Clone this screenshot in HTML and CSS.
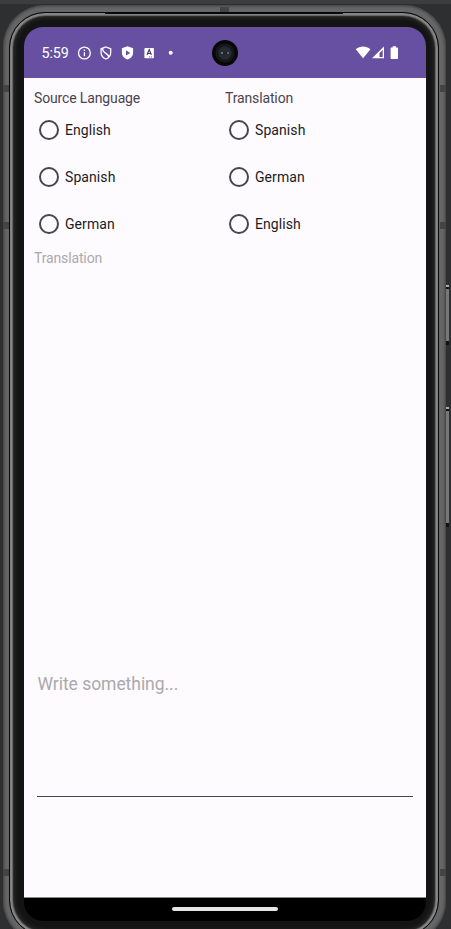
FILE: index.html
```html
<!DOCTYPE html>
<html lang="en">
<head>
<meta charset="utf-8">
<title>Translator</title>
<link rel="stylesheet" href="styles.css">
</head>
<body>
<div class="desk">
  <i class="key power"></i>
  <i class="key volume"></i>
  <div class="shell">
    <i class="band top"></i>
    <i class="band l1"></i><i class="band l2"></i><i class="band l3"></i>
    <i class="band r1"></i><i class="band r2"></i><i class="band r3"></i>
    <div class="rim">
      <i class="slit"></i>
      <div class="screen">
        <header class="status">
          <span class="clock">5:59</span>
          <svg class="notices" width="100" height="16" viewBox="0 0 100 16">
            <g fill="none" stroke="#fff" stroke-width="1.3">
              <circle cx="7.4" cy="8" r="5.9"/>
              <path d="M7.4 7.2v4M7.4 4.6v1.4"/>
              <path d="M28.900 2l4.800 1.800v3.700c0 3-2 5.400-4.800 6.500c-2.800-1.100-4.800-3.500-4.800-6.500V3.800z"/>
              <path d="M25.500 3.500c0 5 5.500 4 6.300 8.500"/>
            </g>
            <path fill="#fff" d="M50.500 1.200l5.600 2.100v4.200c0 3.400-2.400 6-5.600 7.100c-3.200-1.100-5.600-3.700-5.600-7.100V3.300z"/>
            <path fill="#6750a2" d="M49 5.200l4.200 2.700L49 10.600z"/>
            <rect x="67.400" y="3" width="9.500" height="10.300" rx=".8" fill="#fff"/>
            <path d="M70 10l2.200-5.500l2.200 5.500M70.800 8.500h2.800" fill="none" stroke="#4b3b78" stroke-width="1.200"/>
            <path d="M72 12h1M74 12h1" stroke="#6750a2"/>
            <circle cx="93.700" cy="7.800" r="2" fill="#fff"/>
          </svg>
          <span class="camera"><i></i></span>
          <svg class="system" width="46" height="16" viewBox="0 0 46 16">
            <path fill="#fff" d="M.8 4.200C5.200 .6 11 .6 15.400 4.200L8.100 13.300z"/>
            <path fill="#fff" fill-rule="evenodd" d="M29 1.500V13.300H17zM27.700 5L24.500 8V12H27.700z"/>
            <path fill="#fff" d="M37.700 1.300h3.300v1.200h1.200q.8 0 .8.800v10q0 .8-.8.800h-5.800q-.8 0-.8-.8V3.300q0-.8.8-.8h1.300z"/>
          </svg>
        </header>
        <main class="app">
          <div class="columns">
            <section class="group">
              <h2>Source Language</h2>
              <label><i class="radio"></i>English</label>
              <label><i class="radio"></i>Spanish</label>
              <label><i class="radio"></i>German</label>
            </section>
            <section class="group target">
              <h2>Translation</h2>
              <label><i class="radio"></i>Spanish</label>
              <label><i class="radio"></i>German</label>
              <label><i class="radio"></i>English</label>
            </section>
          </div>
          <p class="result">Translation</p>
          <div class="field">Write something...</div>
        </main>
        <footer class="nav"><i></i></footer>
      </div>
    </div>
  </div>
</div>
</body>
</html>
```
FILE: styles.css
```css
* { box-sizing: border-box; }
html, body { margin: 0; height: 929px; overflow: hidden; }
body { font-family: Roboto, sans-serif; background: #2d2f30; }
i { display: block; }

.desk {
  position: relative;
  width: 451px;
  height: 929px;
  padding: 5px 5px 0 3px;
  overflow: hidden;
  background: linear-gradient(#3c3d3f 4px, #2d2f30 4px);
}

.shell {
  position: relative;
  height: 938px;
  padding: 7px 7px 7px 6px;
  border-radius: 42px;
  background: #666;
  box-shadow: inset 0 0 3px 1px #3c3c3c;
}
.rim {
  position: relative;
  height: 924px;
  padding: 14px 11px 0 14px;
  border: 1px solid #070707;
  border-radius: 36px;
  background: #141414;
  box-shadow: inset 0 0 0 2px #858585, inset 0 0 1px 3px #6c6c6c, inset 0 0 5px 4px #333;
}
.band { position: absolute; background: #444; }
.top { left: 217px; top: 2px; width: 9px; height: 5px; }
.l1, .l2, .l3 { left: 0; width: 6px; height: 7px; }
.r1, .r2, .r3 { right: 0; width: 6px; height: 7px; }
.l1, .r1 { top: 80px; }
.l2, .r2 { top: 217px; }
.l3, .r3 { top: 864px; }
.slit { position: absolute; left: 95px; top: -1px; width: 238px; height: 2px; background: #070707; }

.key { position: absolute; left: 446px; width: 3px; background: #777; border: solid #111; border-width: 4px 0; }
.key::before { content: ""; position: absolute; top: -4px; width: 3px; height: 2px; background: #aaa; }
.power { top: 285px; height: 60px; }
.volume { top: 407px; height: 120px; }

.screen {
  display: flex;
  flex-direction: column;
  width: 402px;
  height: 894px;
  border-radius: 19px;
  overflow: hidden;
  background: #000;
}
.status {
  display: flex;
  align-items: center;
  flex: 0 0 51px;
  padding-left: 17.500px;
  background: #6750a2;
  color: #fff;
}
.clock { width: 35.500px; font-size: 14.300px; line-height: 20px; letter-spacing: -.1px; padding-top: 1px; }
.notices { flex: none; }
.camera {
  display: grid;
  place-items: center;
  width: 26px;
  height: 26px;
  margin: 1px 0 0 35px;
  border-radius: 50%;
  background: radial-gradient(circle, #272b30 0 6px, #15171a 7px 9px, #070707 10px);
}
.camera i { width: 8px; height: 2px; background: linear-gradient(90deg, #438078 2px, #222 2px 6px, #4168a5 6px); }
.system { flex: none; margin-left: 117px; margin-top: 0; }

.app {
  display: flex;
  flex-direction: column;
  flex: 1;
  padding: 10px 13px 0 10px;
  background: #fdfbfd;
  border-bottom: 1px solid #888;
}
.columns { display: grid; grid-template-columns: 191px 1fr; height: 160px; }
h2 { margin: 1px 0 0; font-size: 14px; font-weight: 400; line-height: 19px; color: #49454f; letter-spacing: -.14px; }
label { display: flex; align-items: center; gap: 6px; height: 47px; padding-left: 5px; font-size: 14px; letter-spacing: .08px; color: #1c1b1f; }
.group h2 + label { margin-top: -2px; }
.target label { padding-left: 4px; }
.radio { flex: none; width: 20px; height: 20px; border: 2px solid #49454f; border-radius: 50%; }
.result { margin: 1px 0 0; font-size: 14px; line-height: 19px; letter-spacing: -.14px; color: #aba9ac; }
.field {
  height: 127px;
  margin: 402px 0 0 3px;
  padding: 3px .5px;
  border-bottom: 1px solid #49454f;
  font-size: 17.500px;
  line-height: 22px;
  letter-spacing: -.04px;
  color: #aba9ac;
}
.nav { flex: 0 0 23px; }
.nav i { width: 106px; height: 4px; margin: 9px 0 0 148px; border-radius: 2px; background: #e5e5e5; }
```
